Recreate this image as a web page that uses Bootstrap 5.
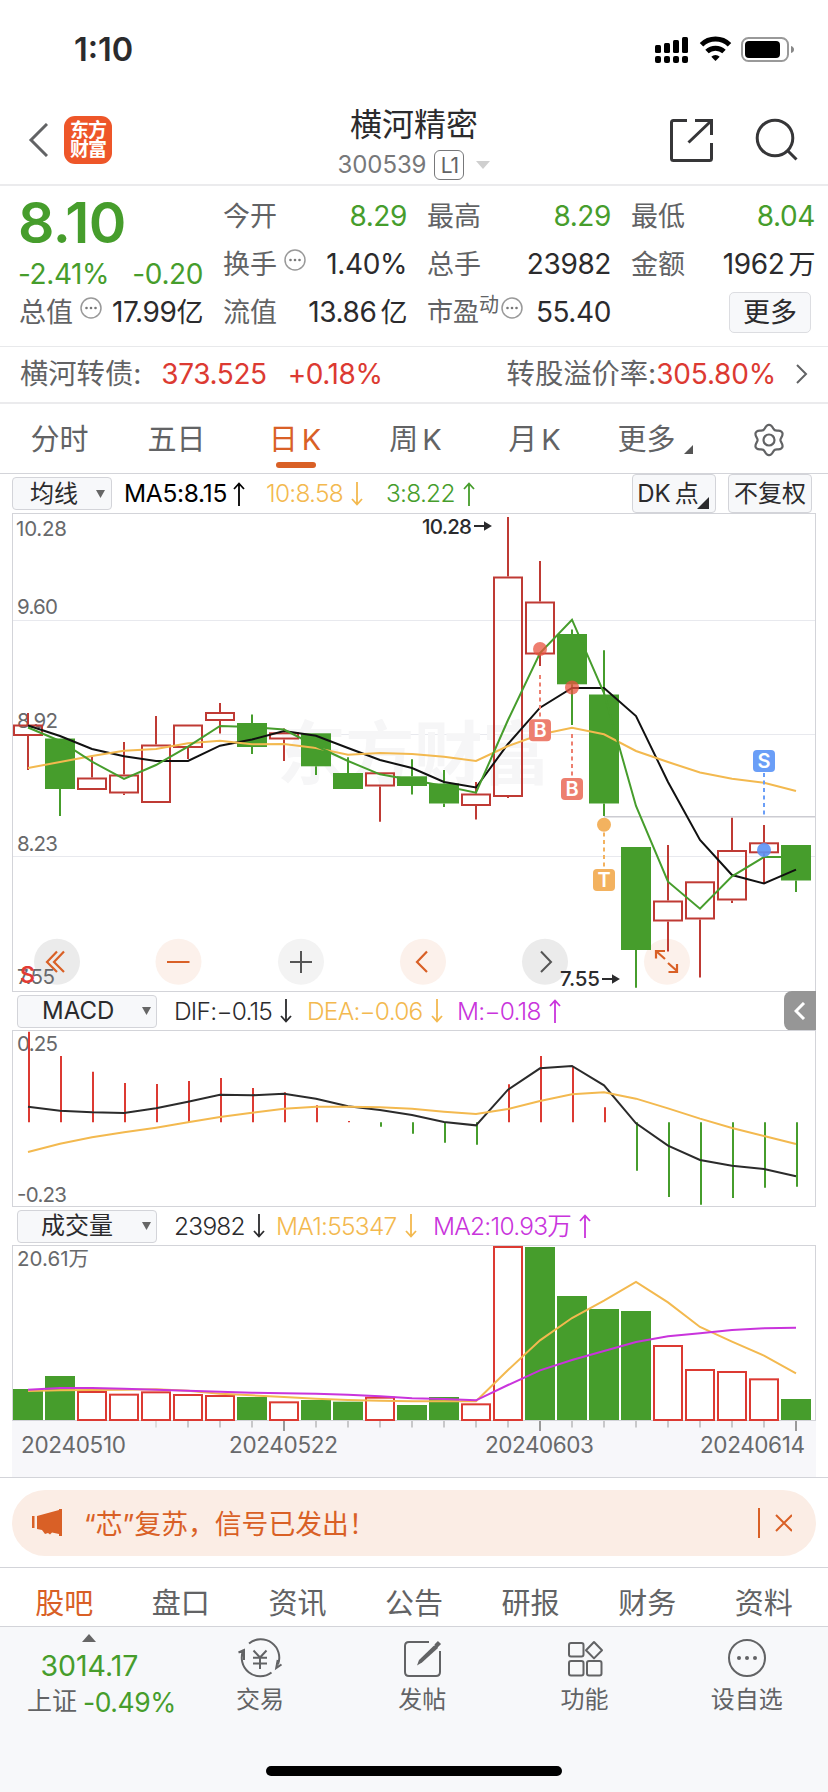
<!DOCTYPE html>
<html lang="zh-CN">
<head>
<meta charset="utf-8">
<meta name="viewport" content="width=device-width, initial-scale=1">
<title>横河精密 300539</title>
<link rel="stylesheet" href="https://cdn.jsdelivr.net/npm/bootstrap@5.3.0/dist/css/bootstrap.min.css">
<style>
:root{--up:#dc3a32;--down:#469d2c;--brand:#d96026;--ink:#2b2b2d;--soft:#626365;--line:#d3d4d9;--pane:#f7f8fa}
body{width:828px;height:1792px;margin:0;overflow:hidden;background:#fff;color:var(--ink);font-family:Inter,"Noto Sans CJK SC",sans-serif;font-size:27px;line-height:1;-webkit-font-smoothing:antialiased}
svg{display:block;flex:none}
.up{color:var(--up)}.down{color:var(--down)}.soft{color:var(--soft)}.brand{color:var(--brand)}
.statusbar{height:100px;padding:0 34px 0 74px}
.clock{font-size:32.5px;font-weight:600;letter-spacing:0}
.topbar{height:86px;border-bottom:2px solid #ebebed;display:grid;grid-template-columns:1fr auto 1fr;padding:0 28px}
.logo{width:48px;height:48px;border-radius:11px;background:#ee5629;color:#fff;font-size:19px;line-height:19px;font-weight:700;letter-spacing:-1px}
.stock{font-size:32px;height:38px;line-height:38px}
.code{font-size:24px;color:#77787a;letter-spacing:-.1px}
.tag{width:30px;height:30px;border:1.5px solid #77787a;border-radius:6px;font-size:21px;letter-spacing:-1px}
.quote{height:161px;border-bottom:1px solid #e8e9eb;display:grid;grid-template-columns:184px 184px 184px 184px;column-gap:20px;padding:6px 0 0 19px}
.qrow{height:48px;display:flex;align-items:center;justify-content:space-between;white-space:nowrap}
.price{font-size:57px;font-weight:600;letter-spacing:-.6px;height:56px;line-height:62px;margin-left:-1px}
.v{font-size:28px;letter-spacing:-.4px}
.unit{font-size:27px;margin-left:4px}
.hint{width:22px;height:22px;margin:-8px 0 0 7px}
.morebtn{width:82px;height:41px;border:1px solid #dcdde1;border-radius:5px;background:var(--pane);font-size:27px;color:var(--ink)}
.bond{height:57px;border-bottom:2px solid #ebebed;padding:0 20px 0 20px}
.bond .soft{font-size:28.3px}
.ktabs{height:70px;border-bottom:1px solid var(--line);font-size:29px;display:grid;grid-template-columns:119px 115px 122px 119px 119px 122px 106px;color:var(--soft)}
.ktabs>div{display:flex;align-items:center;justify-content:center;position:relative;padding-top:2px}
.ktabs b{font-weight:400;margin-left:4px}
.ktabs .on::after{content:"";position:absolute;left:42px;top:58px;width:40px;height:6px;border-radius:3px;background:var(--brand)}
.pill{height:33px;border:1px solid var(--line);border-radius:4px;background:var(--pane);font-size:24px;color:var(--ink)}
.legend{font-size:24.5px;white-space:nowrap;padding-top:1px}
.legend>span{display:flex;align-items:center}
.legend b{font-weight:350;letter-spacing:-.75px}
.legend .ma{font-weight:400;letter-spacing:-.3px}
.purple{color:#c934dc}.amber{color:#f3b94f}
.collapse-btn{width:32px;height:40px;border-radius:8px 0 0 8px;background:#969696}
.notice{height:90px;border-top:1px solid var(--line);padding:12px 12px 0}
.notice>div{height:66px;border-radius:33px;background:#fbede5;font-size:26.8px}
.btabs{height:60px;border-top:1px solid var(--line);border-bottom:1px solid var(--line);font-size:29px;color:var(--soft);padding:13px 6px 0}
.foot{height:165px;background:var(--pane);position:relative;color:var(--soft);font-size:24px}
.foot .slot{width:162.4px;text-align:center;padding-top:10px}
.homebar{position:absolute;left:266px;top:139px;width:296px;height:10px;border-radius:5px;background:#000}
.ax{font-size:20.5px;fill:#68696b}
</style>
</head>
<body>
<header>
<div class="statusbar d-flex align-items-center justify-content-between">
<span class="clock">1:10</span>
<svg width="140" height="30" viewBox="654 35 140 30">
<g><rect x="655" y="45" width="6" height="8" rx="1.5"/><rect x="664" y="43" width="6" height="10" rx="1.5"/><rect x="673" y="40" width="6" height="13" rx="1.5"/><rect x="682" y="37" width="6" height="16" rx="1.5"/><rect x="655" y="56" width="6" height="7" rx="2"/><rect x="664" y="56" width="6" height="7" rx="2"/><rect x="673" y="56" width="6" height="7" rx="2"/><rect x="682" y="56" width="6" height="7" rx="2"/></g>
<path d="M701.5 44.8a20 20 0 0 1 28 0" fill="none" stroke="#000" stroke-width="5"/><path d="M707 51.5a12.5 12.5 0 0 1 17 0" fill="none" stroke="#000" stroke-width="5"/><path d="M711.3 56.7a6 6 0 0 1 8.4 0l-4.2 4.2z"/>
<rect x="742" y="38" width="46" height="23" rx="6.5" fill="none" stroke="#999" stroke-width="2"/><rect x="745" y="41" width="35" height="17" rx="4"/><path d="M791 46q3 1 3 3.500t-3 3.500z" fill="#888"/>
</svg>
</div>
<div class="topbar">
<div class="d-flex align-items-center pb-1">
<svg width="20" height="34" viewBox="0 0 20 34" fill="none" stroke="#626365" stroke-width="3"><path d="M19 1L3 17l16 16"/></svg>
<div class="logo d-flex flex-column align-items-center justify-content-center ms-3"><span>东方</span><span>财富</span></div>
</div>
<div class="d-flex flex-column align-items-center" style="padding-top:6px">
<div class="stock">横河精密</div>
<div class="d-flex align-items-center" style="margin-top:6px"><span class="code">300539</span><span class="tag d-flex align-items-center justify-content-center soft ms-2">L1</span><svg class="ms-2" style="margin-left:12px!important" width="14" height="8"><path d="M0 0h14l-7 8z" fill="#cfcfcf"/></svg></div>
</div>
<div class="d-flex align-items-start justify-content-end">
<svg style="margin-top:17px" width="132" height="46" viewBox="668 117 132 46" fill="none" stroke="#363638" stroke-width="3"><path d="M687 120.500h-13.500q-2 0-2 2v36q0 2 2 2h36q2 0 2-2v-15.500M695 120.500h16.500v14.500M710 122l-21.500 20.500"/><circle cx="775" cy="138" r="17.800"/><path d="M787.500 150.500l9 9"/></svg>
</div>
</div>
</header>
<section class="quote">
<div><div class="price down">8.10</div>
<div class="d-flex justify-content-between down v" style="height:40px;padding-top:12px;margin-left:-1px"><span>-2.41%</span><span>-0.20</span></div>
<div class="qrow"><span class="d-flex align-items-center"><span class="soft">总值</span><svg class="hint"><use href="#dots"/></svg></span><span class="v">17.99<span class="unit ms-0">亿</span></span></div></div>
<div><div class="qrow"><span class="soft">今开</span><span class="down v">8.29</span></div>
<div class="qrow"><span class="d-flex align-items-center"><span class="soft">换手</span><svg class="hint"><use href="#dots"/></svg></span><span class="v">1.40%</span></div>
<div class="qrow"><span class="soft">流值</span><span class="v">13.86<span class="unit">亿</span></span></div></div>
<div><div class="qrow"><span class="soft">最高</span><span class="down v">8.29</span></div>
<div class="qrow"><span class="soft">总手</span><span class="v">23982</span></div>
<div class="qrow"><span class="d-flex align-items-center"><span class="soft" style="font-size:26px">市盈</span><span class="soft" style="font-size:20px;margin-top:-14px">动</span><svg class="hint" style="margin-left:2px"><use href="#dots"/></svg></span><span class="v">55.40</span></div></div>
<div><div class="qrow"><span class="soft">最低</span><span class="down v">8.04</span></div>
<div class="qrow"><span class="soft">金额</span><span class="v">1962<span class="unit">万</span></span></div>
<div class="qrow justify-content-end pe-1"><span class="morebtn d-flex align-items-center justify-content-center">更多</span></div></div>
</section>
<section class="bond d-flex align-items-center justify-content-between">
<div class="d-flex align-items-center"><span class="soft">横河转债:</span><span class="up v" style="margin-left:20px">373.525</span><span class="up v" style="margin-left:21px">+0.18%</span></div>
<div class="d-flex align-items-center"><span class="soft">转股溢价率:</span><span class="up v" style="letter-spacing:-.2px">305.80%</span><svg style="margin-left:20px" width="12" height="20" fill="none" stroke="#626365" stroke-width="2"><path d="M1 1l9 9-9 9"/></svg></div>
</section>
<nav class="ktabs">
<div>分时</div><div>五日</div><div class="on brand">日<b>K</b></div><div>周<b>K</b></div><div>月<b>K</b></div><div>更多<svg class="ms-2" style="margin-top:20px" width="9" height="9"><path d="M9 0v9H0z" fill="#555"/></svg></div>
<div><svg width="34" height="34" viewBox="-17 -17 34 34" fill="none" stroke="#626365" stroke-width="2.200" stroke-linejoin="round"><circle r="5.500"/><path id="gear"/></svg></div>
</nav>
<div class="legend d-flex align-items-center" style="height:39px;padding:0 16px 0 12px">
<span class="pill justify-content-between" style="width:100px;padding:0 6px 0 17px;margin-right:12px">均线<svg width="9" height="8"><path d="M0 0h9l-4.500 8z" fill="#666"/></svg></span>
<span class="text-black" style="width:142px"><b class="ma">MA5:8.15</b><svg style="margin-left:6px" width="12" height="24"><use href="#arr"/></svg></span>
<span class="amber" style="width:120px"><b>10:8.58</b><svg class="ms-2" width="12" height="24"><use href="#ard"/></svg></span>
<span class="down"><b>3:8.22</b><svg class="ms-2" width="12" height="24"><use href="#arr"/></svg></span>
<span class="ms-auto pill justify-content-center position-relative" style="width:84px;height:39px;padding-right:12px">DK<i class="fst-normal ms-1">点</i><svg class="position-absolute" style="right:6px;bottom:3px" width="12" height="12"><path d="M12 0v12H0z" fill="#2b2b2d"/></svg></span>
<span class="pill justify-content-center" style="width:84px;height:39px;margin-left:12px">不复权</span>
</div>
<svg id="kline" width="828" height="479" viewBox="0 513 828 479"></svg>
<div class="legend d-flex align-items-center" style="height:38px;padding:0 12px 0 17px">
<span class="pill justify-content-between" style="width:140px;padding:0 5px 0 24px;margin-right:17px">MACD<svg width="9" height="8"><path d="M0 0h9l-4.500 8z" fill="#666"/></svg></span>
<span style="width:133px"><b>DIF:−0.15</b><svg class="ms-2" width="12" height="24"><use href="#ard"/></svg></span>
<span class="amber" style="width:150px"><b>DEA:−0.06</b><svg class="ms-2" width="12" height="24"><use href="#ard"/></svg></span>
<span class="purple"><b>M:−0.18</b><svg class="ms-2" width="12" height="24"><use href="#arr"/></svg></span>
<span class="collapse-btn ms-auto justify-content-center"><svg width="12" height="18" fill="none" stroke="#fff" stroke-width="3"><path d="M10 1L2 9l8 8"/></svg></span>
</div>
<svg id="macd" width="828" height="177" viewBox="0 1030 828 177"></svg>
<div class="legend d-flex align-items-center" style="height:38px;padding:0 12px 0 17px">
<span class="pill justify-content-between" style="width:140px;padding:0 5px 0 23px;margin-right:17px">成交量<svg width="9" height="8"><path d="M0 0h9l-4.500 8z" fill="#666"/></svg></span>
<span style="width:102px"><b>23982</b><svg class="ms-2" width="12" height="24"><use href="#ard"/></svg></span>
<span class="amber" style="width:157px"><b>MA1:55347</b><svg class="ms-2" width="12" height="24"><use href="#ard"/></svg></span>
<span class="purple"><b>MA2:10.93万</b><svg class="ms-2" width="12" height="24"><use href="#arr"/></svg></span>
</div>
<svg id="volume" width="828" height="232" viewBox="0 1245 828 232"></svg>
<section class="notice"><div class="d-flex align-items-center brand" style="padding:0 24px 0 20px">
<svg width="31" height="28" viewBox="0 0 31 28" fill="#d96026"><path d="M0 7h2.500v12H0zM5 7L27 1V0h3v27h-3v-2l-7-1.500-2 2-2-1.500-3 1-3-4-5-1z"/></svg>
<span style="margin-left:21px;padding-top:3px">“芯”复苏，信号已发出！</span>
<svg class="ms-auto" width="34" height="30" fill="none" stroke="#d96026" stroke-width="2"><path d="M1 0v30M18 7l16 16M34 7L18 23"/></svg>
</div></section>
<nav class="btabs d-flex">
<div class="col d-flex align-items-center justify-content-center brand">股吧</div><div class="col d-flex align-items-center justify-content-center">盘口</div><div class="col d-flex align-items-center justify-content-center">资讯</div><div class="col d-flex align-items-center justify-content-center">公告</div><div class="col d-flex align-items-center justify-content-center">研报</div><div class="col d-flex align-items-center justify-content-center">财务</div><div class="col d-flex align-items-center justify-content-center">资料</div>
</nav>
<footer class="foot">
<div class="d-flex">
<div style="width:179px;padding-top:7px" class="text-center"><svg class="mx-auto" width="14" height="8"><path d="M0 8h14L7 0z" fill="#666"/></svg>
<div class="down v" style="font-size:28.500px;letter-spacing:0;margin-top:10px">3014.17</div>
<div class="d-flex justify-content-center" style="margin-top:8px;margin-left:24px"><span style="font-size:25px">上证</span><span class="down v" style="font-size:26.500px;margin-left:6px">-0.49%</span></div></div>
<div class="slot"><svg class="mx-auto" width="46" height="42" viewBox="238 1636 46 42" fill="none" stroke="#626365" stroke-width="2"><path d="M250 1642.500a18.500 18.500 0 0 1 29 21M276.500 1667l6-3.500-5.300 3.500 1.500-8M272.500 1671.500a18.500 18.500 0 0 1-28-22.500M239.500 1651.500l5.500-2.500v10M254.500 1649.500l6.500 7 6.500-7M254 1656.800h14M254 1662.500h14M261 1656v12"/></svg><div style="margin-top:9px">交易</div></div>
<div class="slot"><svg class="mx-auto" width="42" height="42" viewBox="402 1636 42 42" fill="none" stroke="#626365" stroke-width="2"><path d="M430 1641h-20q-4 0-4 4v26q0 4 4 4h27q4 0 4-4v-21"/><path d="M434.500 1645l3-1.500 1.500 3.500-16 14.500-5 3 2-5.500z" fill="#626365" stroke="none"/><path d="M437 1645l3.500-3.500" stroke-width="4.500"/></svg><div style="margin-top:9px">发帖</div></div>
<div class="slot"><svg class="mx-auto" width="42" height="42" viewBox="564 1636 42 42" fill="none" stroke="#626365" stroke-width="2"><rect x="569" y="1642" width="14.500" height="13.500" rx="2"/><rect x="569" y="1660" width="14.500" height="14.500" rx="2"/><rect x="587" y="1660" width="14.500" height="14.500" rx="2"/><path d="M594 1641l8 8.200-8 8.200-8-8.200z" stroke-linejoin="round"/></svg><div style="margin-top:9px">功能</div></div>
<div class="slot"><svg class="mx-auto" width="42" height="42" viewBox="-21 -21 42 42"><circle r="18" fill="none" stroke="#626365" stroke-width="2"/><circle cx="-8" r="2" fill="#626365"/><circle r="2" fill="#626365"/><circle cx="8" r="2" fill="#626365"/></svg><div style="margin-top:9px">设自选</div></div>
</div>
<div class="homebar"></div>
</footer>
<svg width="0" height="0" class="position-absolute"><defs>
<symbol id="dots" viewBox="0 0 22 22"><circle cx="11" cy="11" r="10" fill="none" stroke="#999" stroke-width="1.500"/><circle cx="6.500" cy="11" r="1.300" fill="#777"/><circle cx="11" cy="11" r="1.300" fill="#777"/><circle cx="15.500" cy="11" r="1.300" fill="#777"/></symbol>
<symbol id="arr" viewBox="0 0 12 24"><path d="M6 24V2M1 7l5-5.500L11 7" fill="none" stroke="currentColor" stroke-width="1.800"/></symbol>
<symbol id="ard" viewBox="0 0 12 24"><path d="M6 0v22M1 17l5 5.500 5-5.500" fill="none" stroke="currentColor" stroke-width="1.800"/></symbol>
</defs></svg>
<script src="https://cdn.jsdelivr.net/npm/bootstrap@5.3.0/dist/js/bootstrap.bundle.min.js"></script>
<script>
const RED='#bf3a34', VRED='#dc3a32', GREEN='#469d2c', AMBER='#f3b94f', PURPLE='#c934dc';
const X=i=>28+32*i;
const line=(ys,c,w=2)=>`<polyline fill="none" stroke="${c}" stroke-width="${w}" points="${ys.map((y,i)=>X(i)+','+y).join(' ')}"/>`;
const text=(s,x,y,w,extra='class="ax"')=>`<text x="${x}" y="${y}" textLength="${w}" ${extra}>${s}</text>`;
const frame=(t,b)=>`<rect x="12.500" y="${t}" width="803" height="${b-t}" fill="none" stroke="#d3d4d9"/>`;

/* candles: kind, high, body top, body bottom, low */
const candles=[['r',713,724.5,736,770],['g',738.5,738.5,789,816],['r',757,777.5,790,790],['r',742,774.5,793.5,795],['r',716,744.5,803,803],['r',724.5,724.5,748,759],['r',703,712,721,733.5],['g',714.5,723,747,754],['r',728.5,732.3,739.5,761],['g',733.3,733.3,766.3,775],['g',757.3,773,789,789],['r',772.3,772.3,786.5,821.7],['g',759.3,776.3,786,794.5],['g',770,783.5,803.5,807],['r',782,793.5,806,819.5],['r',517,576.5,797,798],['r',561,601.5,654.5,666],['g',629.5,634,684.3,725],['g',650.3,694.5,803.5,816],['g',847,847,950,987.7],['r',845,900.5,921.5,951.5],['r',881.3,881.3,919.5,977.5],['r',817.7,850,900.5,903],['r',825,842.3,853.3,884],['g',845,845,880.5,892]];
const ma5=[725.5,736,749,756.3,761,761,745.7,739.5,731,735.7,748,760,768,782,787.5,744,707.7,688,688,716,782,840,875,883.5,869.7];
const ma10=[768,762,756,750.7,749,743.3,740.7,744.3,744,748,754.7,753,754,756.7,761,746,734.5,727.7,734.3,751,762,772.5,778.7,782.7,791];
const ma3=[727.5,741,761.7,779,765,746.7,726,727,729.5,746,761,774.3,780,786,792.7,720,653,619.7,693,806,881.7,908.7,876.3,857,857];
let k=frame(513.5,991.5)+[620.5,734.5,856.5].map(y=>`<path d="M13 ${y}H815" stroke="#e8e9ee"/>`).join('');
k+=text('东方财富',277,779,274,'font-size="69" font-weight="700" fill="#f6f6f7"');
k+='<path d="M604 816.700H815" stroke="#ccccd2" stroke-width="1.500"/>';
const fills=['#ebebeb','#fcf1eb','#f3f3f3','#fcf1eb','#ebebeb','#fcf1eb'];
k+=[57,178.5,301,423,545,667].map((x,i)=>`<circle cx="${x}" cy="961.700" r="23" fill="${fills[i]}"/>`).join('');
k+=text('10.28',16,536,51)+text('9.60',17,614,41)+text('8.92',17,728,41)+text('8.23',17,851,41)+text('7.55',17,984,38);
candles.forEach(([t,h,a,b,l],i)=>{const x=X(i),c=t=='r'?RED:GREEN;
 k+=`<path d="M${x} ${h}V${a}M${x} ${b}V${l}" stroke="${c}" stroke-width="2"/>`;
 k+=t=='r'?`<rect x="${x-14}" y="${a+1}" width="28" height="${b-a-2}" fill="none" stroke="${c}" stroke-width="2"/>`:`<rect x="${x-15}" y="${a}" width="30" height="${b-a}" fill="${c}"/>`;});
k+=line(ma5,'#111')+line(ma10,AMBER)+line(ma3,GREEN);
const dash=(x,a,b,c)=>`<path d="M${x} ${a}V${b}" stroke="${c}" stroke-width="2" stroke-dasharray="4 3.500"/>`;
const badge=(s,x,y,c)=>`<rect x="${x-11}" y="${y-11}" width="22" height="22" rx="4" fill="${c}"/><text x="${x}" y="${y+7}" text-anchor="middle" font-size="20" font-weight="600" fill="#fff">${s}</text>`;
k+=`<circle cx="540" cy="649" r="7" fill="#e8533f" opacity=".75"/><circle cx="572" cy="687.500" r="7" fill="#e8533f" opacity=".75"/><circle cx="604" cy="824.700" r="7" fill="#f3b25f"/><circle cx="764" cy="850" r="7" fill="#5b92f5" opacity=".9"/>`;
k+=dash(540,675,718,'#ed7f6f')+dash(572,734,777,'#ed7f6f')+dash(604,825,868,'#f3b25f')+dash(764,773,816,'#6a9ef7');
k+=badge('B',540,730.3,'#ed7f6f')+badge('B',572,789,'#ed7f6f')+badge('T',604,880,'#f3b25f')+badge('S',764,761,'#6a9ef7');
const ann='font-size="20.500" font-weight="500" fill="#2b2b2d"';
k+=text('10.28',422,534,50,ann)+text('7.55',560,986,40,ann);
k+='<g stroke="#2b2b2d" stroke-width="2" fill="#2b2b2d"><path d="M474 526h12M602 979h12"/><path d="M485 523l5 3-5 3zM613 976l5 3-5 3z"/></g>';
k+='<g fill="none" stroke="#d96026" stroke-width="2.200"><path d="M57 951.500L47 962l10 10M64 951.500L54 962l10 10M167 962h22.500M427 951.500L417 962l10 10"/><path d="M656 951l9 8M656 958.500V951h9M668 963l9 8M677 964v8h-8.500"/></g><g fill="none" stroke="#555" stroke-width="2"><path d="M290 962h22M301 951v22M541 951.500l10 10.500-10 10"/></g>';
k+='<text x="20" y="983" font-size="23" font-weight="600" fill="#e23b35">S</text>';
kline.innerHTML=k;

/* MACD, values are offsets in thirds of a pixel below y=980 */
const m=v=>980+v/3;
const bars=[155,228,275,309,312,303,294,324,337,376,423,440,461,488,494,313,228,260,382,572,651,674,654,623,620];
const dif=[380,392,397,399,385,365,344,346,341,356,379,390,405,426,436,329,265,258,316,430,497,540,557,567,589].map(m);
const dea=[516,491,472,457,443,427,411,398,386,380,380,382,386,395,402,387,363,343,337,356,385,416,444,468,492].map(m);
macd.innerHTML=frame(1030.5,1206.5)+text('0.25',17,1050.7,41)+text('-0.23',17,1201.7,50)+bars.map((v,i)=>`<path d="M${X(i)+1} ${m(427)}V${m(v)}" stroke="${v<427?VRED:GREEN}" stroke-width="2"/>`).join('')+line(dif,'#2b2b2b')+line(dea,AMBER);

/* volume bars, offsets in thirds of a pixel below y=1200 */
const q=v=>1200+v/3;
const vol=[567,528,573,581,574,582,585,591,604,600,605,590,615,591,610,138,141,288,327,333,435,507,513,535,597];
const redVol=new Set([2,3,4,5,6,8,11,14,15,20,21,22,23]);
const v1=[573,571,570,569,568,572,581,586,591,596,600,602,604,604,604,510,421,354,302,246,307,381,425,467,520].map(q);
const v2=[569,564,564,566,569,572,575,578,580,581,584,589,595,597,601,555,511,480,453,426,409,400,390,385,383].map(q);
let w='<rect x="12" y="1421" width="804" height="56" fill="#f7f7fa"/>'+frame(1245.5,1420.5)+text('20.61万',17,1266,72);
vol.forEach((v,i)=>{const x=X(i),y=q(v);w+=redVol.has(i)?`<rect x="${x-14}" y="${y+1}" width="28" height="${1419-y}" fill="#fff" stroke="${VRED}" stroke-width="2"/>`:`<rect x="${x-15}" y="${y}" width="30" height="${1420-y}" fill="${GREEN}"/>`;
 if(i>3){const big=i%8==0;w+=`<path d="M${x} 1421v${big?10:6.5}" stroke="${big?'#999':i==4?'#dedede':'#c8c8ca'}" stroke-width="2"/>`;}});
w+=line(v1,AMBER)+line(v2,PURPLE);
[['20240510',21,105],['20240522',229,109],['20240603',485,109],['20240614',700,105]].forEach(([s,x,l])=>w+=text(s,x,1452.5,l,'font-size="22.500" fill="#68696b"'));
volume.innerHTML=w;

/* six-lobed gear outline */
let g='';for(let a=0;a<=72;a++){const t=a*Math.PI/36,r=13.3+1.9*Math.cos(6*t);g+=(a?'L':'M')+(r*Math.sin(t)).toFixed(2)+' '+(-r*Math.cos(t)).toFixed(2);}
gear.setAttribute('d',g+'Z');
</script>
</body>
</html>
